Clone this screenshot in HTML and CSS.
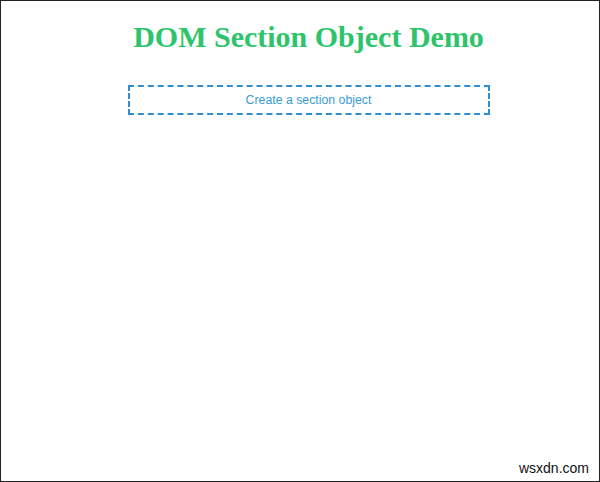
FILE: index.html
```html
<!DOCTYPE html>
<html>
<head>
<meta charset="utf-8">
<link rel="stylesheet" href="styles.css">
</head>
<body>
<div class="frame">
  <div class="content">
    <h1 class="title">DOM Section Object Demo</h1>
    <button class="create-btn">Create a section object</button>
  </div>
  <div class="watermark">wsxdn.com</div>
</div>
</body>
</html>
```
FILE: styles.css
```css
html, body {
  margin: 0;
  padding: 0;
  background: #fff;
}
.frame {
  box-sizing: border-box;
  width: 600px;
  height: 482px;
  border: 1px solid #222;
  position: relative;
  background: #fff;
}
.content {
  display: flex;
  flex-direction: column;
  align-items: center;
  padding-left: 17px;
  padding-top: 19px;
}
.title {
  margin: 0;
  font-family: "Liberation Serif", serif;
  font-weight: bold;
  font-size: 30px;
  line-height: 34px;
  color: #2ec46c;
}
.create-btn {
  margin-top: 31px;
  box-sizing: border-box;
  width: 362px;
  height: 30px;
  border: 2px dashed #2e8ed0;
  background: #fff;
  color: #3a9bd5;
  font-family: "Liberation Sans", Arial, sans-serif;
  font-size: 12.3px;
  padding: 0;
}
.watermark {
  position: absolute;
  right: 10px;
  bottom: 5px;
  font-family: "Liberation Sans", Arial, sans-serif;
  font-size: 14px;
  color: #111;
}
```
